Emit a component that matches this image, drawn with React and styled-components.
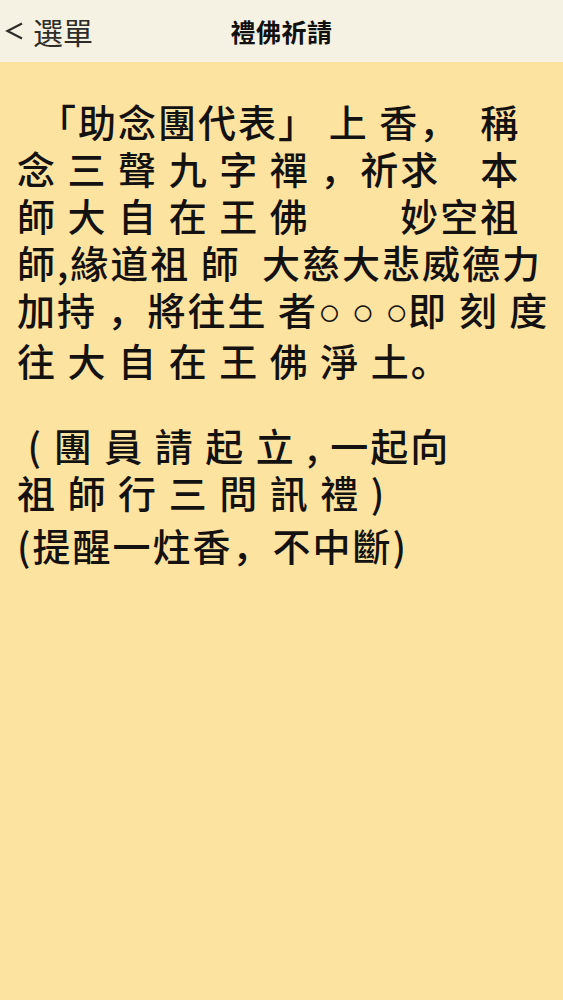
import React from "react";
import styled, { createGlobalStyle } from "styled-components";

const GlobalStyle = createGlobalStyle`
  html, body {
    margin: 0;
    padding: 0;
    background: #fde3a0;
  }
  body {
    font-family: "Noto Sans CJK SC", "Noto Sans CJK TC", sans-serif;
    color: #141210;
    overflow: hidden;
  }
`;

const Page = styled.div`
  min-height: 100vh;
  display: flex;
  flex-direction: column;
`;

const TopBar = styled.header`
  height: 62px;
  background: #f6f2e3;
  display: grid;
  grid-template-columns: 1fr auto 1fr;
  align-items: center;
`;

const BackButton = styled.div`
  display: flex;
  align-items: center;
  gap: 9px;
  padding-left: 5px;
  color: #2e2c28;
  font-size: 30px;
  line-height: 1;
`;

const Chevron = styled.svg`
  width: 19px;
  height: 18px;
  flex: none;
`;

const Title = styled.h1`
  margin: 0;
  font-size: 25px;
  font-weight: 700;
  color: #111;
  letter-spacing: 0.5px;
`;

const Content = styled.main`
  padding: 35px 17px 0;
`;

const Paragraph = styled.div`
  margin-top: ${props => props.gap || 0}px;
  font-size: 38px;
  font-weight: 500;
  letter-spacing: 2px;
  line-height: 47px;
`;

const Line = styled.div`
  white-space: pre;
`;

const Circles = styled.span`
  font-family: "Liberation Sans", sans-serif;
  letter-spacing: 0;
`;

export default function App() {
  return (
    <Page>
      <GlobalStyle />
      <TopBar>
        <BackButton>
          <Chevron viewBox="0 0 19 18">
            <polyline
              points="17,1.5 2.5,9 17,16.5"
              fill="none"
              stroke="#2e2c28"
              strokeWidth="2.2"
              strokeLinejoin="miter"
            />
          </Chevron>
          <span>選單</span>
        </BackButton>
        <Title>禮佛祈請</Title>
        <div />
      </TopBar>
      <Content>
        <Paragraph>
          <Line>{"  「助念團代表」 上 香，  稱"}</Line>
          <Line>{"念 三 聲 九 字 禪 ，祈求　本"}</Line>
          <Line>{"師 大 自 在 王 佛 　　妙空祖"}</Line>
          <Line>{"師,緣道祖 師  大慈大悲威德力"}</Line>
          <Line>
            {"加持 ，將往生 者"}
            <Circles>○ ○ ○</Circles>
            {"即 刻 度"}
          </Line>
          <Line>{"往 大 自 在 王 佛 淨 土。"}</Line>
        </Paragraph>
        <Paragraph gap={38}>
          <Line>{" ( 團 員 請 起 立 , 一起向"}</Line>
          <Line>{"祖 師 行 三 問 訊 禮 )"}</Line>
        </Paragraph>
        <Paragraph gap={6}>
          <Line>{"(提醒一炷香，不中斷)"}</Line>
        </Paragraph>
      </Content>
    </Page>
  );
}
